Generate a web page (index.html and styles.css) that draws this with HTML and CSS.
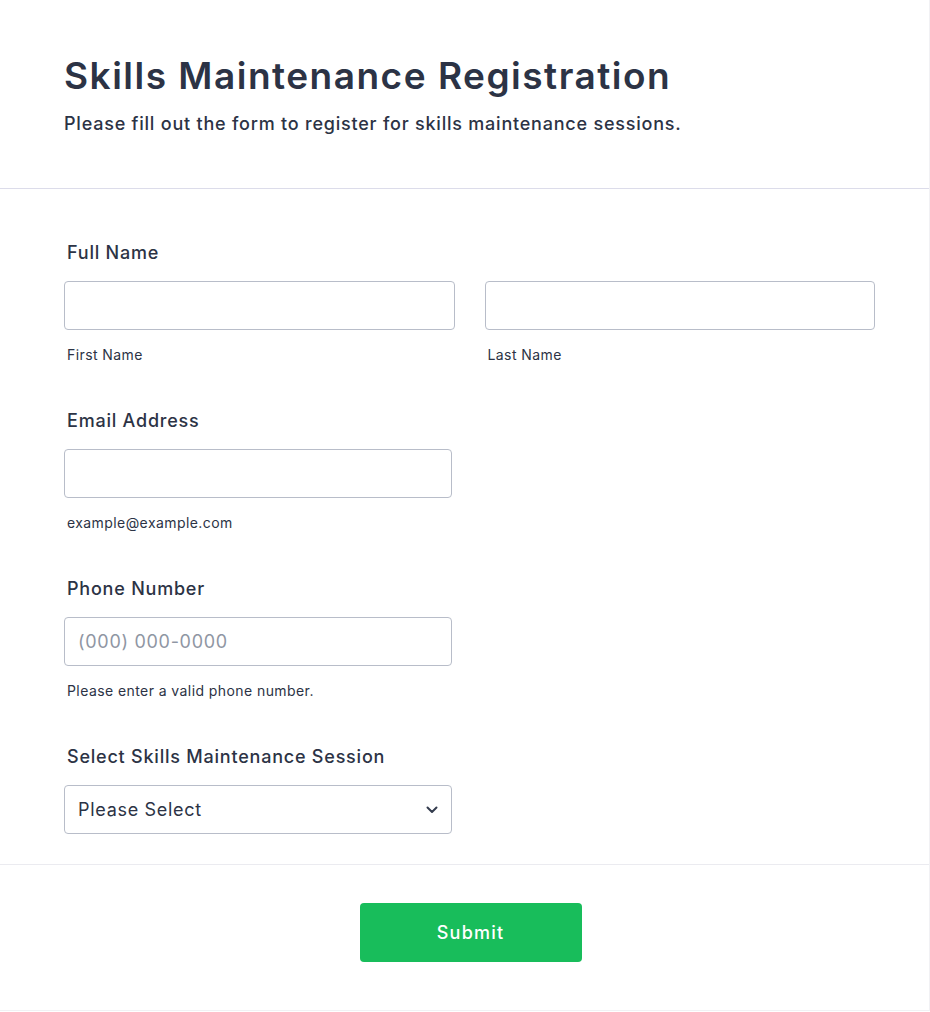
FILE: index.html
```html
<!DOCTYPE html>
<html lang="en">
<head>
<meta charset="utf-8">
<title>Skills Maintenance Registration</title>
<link rel="stylesheet" href="styles.css">
</head>
<body>
<div class="card">
  <header class="header">
    <h1 class="title">Skills Maintenance Registration</h1>
    <p class="subtitle">Please fill out the form to register for skills maintenance sessions.</p>
  </header>
  <form class="form">
    <div class="field">
      <label class="label">Full Name</label>
      <div class="name-row">
        <div class="name-col">
          <input class="input" type="text">
          <span class="sublabel">First Name</span>
        </div>
        <div class="name-col">
          <input class="input" type="text">
          <span class="sublabel">Last Name</span>
        </div>
      </div>
    </div>
    <div class="field">
      <label class="label">Email Address</label>
      <input class="input input-half" type="email">
      <span class="sublabel">example@example.com</span>
    </div>
    <div class="field">
      <label class="label">Phone Number</label>
      <input class="input input-half" type="tel" placeholder="(000) 000-0000">
      <span class="sublabel">Please enter a valid phone number.</span>
    </div>
    <div class="field field-last">
      <label class="label">Select Skills Maintenance Session</label>
      <div class="select input-half">
        <span class="select-text">Please Select</span>
        <svg class="chevron" width="12" height="8" viewBox="0 0 12 8"><path d="M1.5 1.5 L6 6 L10.5 1.5" fill="none" stroke="#343c4e" stroke-width="2" stroke-linecap="round" stroke-linejoin="round"/></svg>
      </div>
    </div>
  </form>
  <footer class="footer">
    <button class="submit" type="button">Submit</button>
  </footer>
</div>
</body>
</html>
```
FILE: styles.css
```css
* { box-sizing: border-box; }
html, body { margin: 0; padding: 0; background: #ffffff; }
body {
  font-family: Inter, "Noto Sans", "Liberation Sans", sans-serif;
  color: #2c3345;
  letter-spacing: 0.04em;
}
.card {
  width: 930px;
  height: 1011px;
  background: #ffffff;
  border-right: 1px solid #f1f1f4;
  border-bottom: 1px solid #f1f1f4;
}
.header {
  padding: 54px 64px 0 64px;
  height: 189px;
  border-bottom: 1px solid #dcdcea;
}
.title {
  margin: 0;
  font-size: 37px;
  line-height: 44px;
  font-weight: 600;
  letter-spacing: 1.5px;
  color: #2c3345;
}
.subtitle {
  margin: 14px 0 0 0;
  font-size: 18px;
  line-height: 24px;
  font-weight: 500;
  letter-spacing: 0.78px;
  color: #2c3345;
}
.form {
  padding: 52px 54px 0 64px;
  border-bottom: 1px solid #ebebf0;
}
.field {
  display: flex;
  flex-direction: column;
  align-items: flex-start;
  padding-bottom: 45px;
}
.field-last { padding-bottom: 30px; }
.label {
  display: block;
  font-size: 18px;
  line-height: 24px;
  font-weight: 500;
  letter-spacing: 0.78px;
  padding-left: 3px;
  margin-bottom: 16px;
}
.name-row {
  display: flex;
  gap: 30px;
  width: 100%;
}
.name-col {
  flex: 1;
  display: flex;
  flex-direction: column;
}
.input {
  display: block;
  width: 100%;
  height: 49px;
  border: 1px solid #b8bdc9;
  border-radius: 4px;
  background: #ffffff;
  padding: 0 13px;
  font-family: inherit;
  font-size: 18px;
  letter-spacing: 0.7px;
  color: #2c3345;
  outline: none;
}
.input::placeholder { color: #8f96a3; }
.input-half { width: 388px; }
.sublabel {
  display: block;
  margin-top: 16px;
  padding-left: 3px;
  font-size: 14px;
  line-height: 18px;
  letter-spacing: 0.42px;
  color: #2c3345;
}
.select {
  display: flex;
  align-items: center;
  justify-content: space-between;
  height: 49px;
  border: 1px solid #b8bdc9;
  border-radius: 4px;
  padding: 0 13px 0 13px;
  font-size: 18px;
  letter-spacing: 0.7px;
  color: #2c3345;
}
.chevron { display: block; }
.footer {
  display: flex;
  justify-content: center;
  padding: 38px 52px 0 64px;
}
.submit {
  width: 222px;
  height: 59px;
  border: none;
  border-radius: 4px;
  background: #18bd5b;
  color: #ffffff;
  font-family: inherit;
  font-size: 18px;
  font-weight: 500;
  letter-spacing: 1.2px;
  cursor: pointer;
}
```
